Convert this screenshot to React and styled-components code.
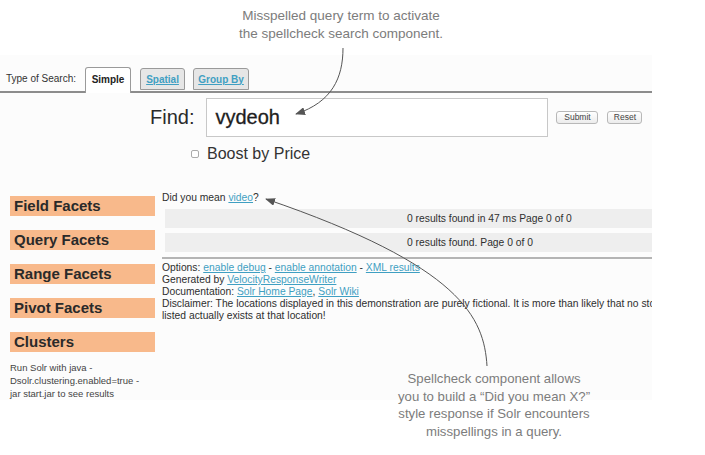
import React from 'react'
import styled, {createGlobalStyle} from 'styled-components'

// -------------------------------------------------------------
// Constants.
// -------------------------------------------------------------

const LINK = '#3f9fc2'
const FACET = '#f8b98b'
const NOTE = '#7c7c7c'

const facets = ['Field Facets', 'Query Facets', 'Range Facets', 'Pivot Facets', 'Clusters']

// -------------------------------------------------------------
// Global.
// -------------------------------------------------------------

const Global = createGlobalStyle`
  html, body {
    margin: 0;
    padding: 0;
    background: #ffffff;
  }

  body {
    font-family: "Liberation Sans", Arial, sans-serif;
    color: #2b2b2b;
  }
`

const Figure = styled.div`
  position: relative;
  width: 705px;
  height: 455px;
  overflow: hidden;
  background: #ffffff;
`

// -------------------------------------------------------------
// Callouts.
// -------------------------------------------------------------

const TopNote = styled.p`
  margin: 0;
  padding-top: 7px;
  width: 280px;
  margin-left: 201px;

  font-size: 13.5px;
  line-height: 18px;
  text-align: center;
  color: ${NOTE};
`

const BottomNote = styled.p`
  position: absolute;
  left: 374px;
  top: 370px;
  width: 240px;
  margin: 0;

  font-size: 13.2px;
  line-height: 17.5px;
  text-align: center;
  color: ${NOTE};
`

const Arrows = styled.svg`
  position: absolute;
  left: 0;
  top: 0;
  pointer-events: none;
`

// -------------------------------------------------------------
// Screenshot.
// -------------------------------------------------------------

const Shot = styled.div`
  margin-top: 12px;
  width: 652px;
  height: 345px;
  overflow: hidden;
  background: #fcfcfc;
`

const TabBar = styled.div`
  display: flex;
  align-items: flex-end;
  height: 24px;
  padding-top: 12px;
  padding-left: 6px;
  border-bottom: 2px solid #8c8c8c;
`

const TabLabel = styled.span`
  font-size: 10px;
  line-height: 24px;
  margin-right: 9px;
  color: #333;
`

const Tab = styled.span`
  display: flex;
  align-items: center;
  justify-content: center;
  box-sizing: border-box;
  width: ${p => p.width}px;
  height: ${p => (p.active ? 26 : 22)}px;
  margin-bottom: ${p => (p.active ? -2 : 1)}px;
  margin-right: ${p => (p.active ? 9 : 8)}px;
  padding-bottom: ${p => (p.active ? 2 : 0)}px;

  border: 1px solid #9a9a9a;
  border-bottom: ${p => (p.active ? 'none' : '1px solid #9a9a9a')};
  border-radius: 3px 3px 0 0;
  background: ${p => (p.active ? '#ffffff' : '#e6e6e6')};

  font-size: 10px;
  font-weight: bold;
  white-space: nowrap;
  color: ${p => (p.active ? '#222' : LINK)};
  text-decoration: ${p => (p.active ? 'none' : 'underline')};
`

const SearchRow = styled.div`
  display: flex;
  align-items: center;
  margin-top: 5px;
  padding-left: 150px;
`

const FindLabel = styled.span`
  font-size: 20px;
  color: #2a2a2a;
  margin-right: 12px;
`

const QueryBox = styled.div`
  display: flex;
  align-items: center;
  box-sizing: border-box;
  width: 342px;
  height: 39px;
  padding-left: 8px;

  border: 1px solid #c8c8c8;
  background: #ffffff;

  font-size: 20px;
  color: #1e1e1e;
  -webkit-text-stroke: 0.3px #1e1e1e;
`

const Button = styled.span`
  box-sizing: border-box;
  width: ${p => p.width}px;
  height: 13px;
  margin-left: ${p => p.gap}px;

  border: 1px solid #b8b8b8;
  border-radius: 3px;
  background: linear-gradient(#ffffff, #ececec);

  font-size: 8.5px;
  line-height: 11px;
  text-align: center;
  color: #444;
`

const BoostRow = styled.div`
  display: flex;
  align-items: center;
  margin-top: 8px;
  padding-left: 191px;

  font-size: 16px;
  line-height: 18px;
  color: #333;
`

const Check = styled.span`
  box-sizing: border-box;
  width: 8px;
  height: 8px;
  margin-right: 8px;
  border: 1px solid #ababab;
  border-radius: 2px;
  background: #ffffff;
`

const Body = styled.div`
  display: grid;
  grid-template-columns: 162px 490px;
  margin-top: 29px;
`

const Sidebar = styled.div`
  padding-top: 4px;
  padding-left: 10px;
`

const Facet = styled.div`
  width: 145px;
  height: 20px;
  margin-bottom: 14px;
  padding-left: 4px;
  box-sizing: border-box;

  background: ${FACET};

  font-size: 15px;
  font-weight: bold;
  line-height: 20px;
  color: #2a2a2a;
`

const Hint = styled.p`
  margin: -5px 0 0;
  font-size: 9.5px;
  line-height: 13px;
  color: #444;
`

const Main = styled.div`
  overflow: hidden;
  font-size: 10.3px;
  line-height: 12px;
  color: #2e2e2e;
`

const Link = styled.a`
  color: ${LINK};
  text-decoration: underline;
`

const ResultBar = styled.div`
  height: 19px;
  margin: 5px 0 0 3px;
  padding-left: 242px;
  background: #eeeeee;
  line-height: 19px;
  white-space: nowrap;
`

const Rule = styled.div`
  height: 2px;
  margin-top: 5px;
  background: #b4b4b4;
`

const Footer = styled.div`
  margin-top: 3px;
`

const Line = styled.div`
  white-space: nowrap;
  overflow: hidden;
`

// -------------------------------------------------------------
// Export.
// -------------------------------------------------------------

export default function App() {
  return (
    <Figure>
      <Global />
      <TopNote>
        Misspelled query term to activate
        <br />
        the spellcheck search component.
      </TopNote>

      <Shot>
        <TabBar>
          <TabLabel>Type of Search:</TabLabel>
          <Tab active width={46}>Simple</Tab>
          <Tab width={45}>Spatial</Tab>
          <Tab width={56}>Group By</Tab>
        </TabBar>

        <SearchRow>
          <FindLabel>Find:</FindLabel>
          <QueryBox>vydeoh</QueryBox>
          <Button gap={8} width={42}>Submit</Button>
          <Button gap={9} width={35}>Reset</Button>
        </SearchRow>

        <BoostRow>
          <Check />
          Boost by Price
        </BoostRow>

        <Body>
          <Sidebar>
            {facets.map(name => (
              <Facet key={name}>{name}</Facet>
            ))}
            <Hint>
              Run Solr with java -
              <br />
              Dsolr.clustering.enabled=true -
              <br />
              jar start.jar to see results
            </Hint>
          </Sidebar>

          <Main>
            Did you mean <Link>video</Link>?
            <ResultBar>0 results found in 47 ms Page 0 of 0</ResultBar>
            <ResultBar>0 results found. Page 0 of 0</ResultBar>
            <Rule />
            <Footer>
              <Line>
                Options: <Link>enable debug</Link> - <Link>enable annotation</Link> -{' '}
                <Link>XML results</Link>
              </Line>
              <Line>
                Generated by <Link>VelocityResponseWriter</Link>
              </Line>
              <Line>
                Documentation: <Link>Solr Home Page</Link>, <Link>Solr Wiki</Link>
              </Line>
              <Line>
                Disclaimer: The locations displayed in this demonstration are purely fictional. It
                is more than likely that no store
              </Line>
              <Line>listed actually exists at that location!</Line>
            </Footer>
          </Main>
        </Body>
      </Shot>

      <Arrows width="705" height="455" viewBox="0 0 705 455">
        <defs>
          <marker id="head" markerWidth="10" markerHeight="8" refX="9" refY="4" orient="auto" markerUnits="userSpaceOnUse">
            <path d="M0 0 L10 4 L0 8 Z" fill="#555" />
          </marker>
        </defs>
        <path d="M343 48 C 343 78, 332 102, 296 114" fill="none" stroke="#555" strokeWidth="1" markerEnd="url(#head)" />
        <path d="M487 366 C 484 318, 462 266, 266 199" fill="none" stroke="#555" strokeWidth="1" markerEnd="url(#head)" />
      </Arrows>

      <BottomNote>
        Spellcheck component allows
        <br />
        you to build a “Did you mean X?”
        <br />
        style response if Solr encounters
        <br />
        misspellings in a query.
      </BottomNote>
    </Figure>
  )
}
